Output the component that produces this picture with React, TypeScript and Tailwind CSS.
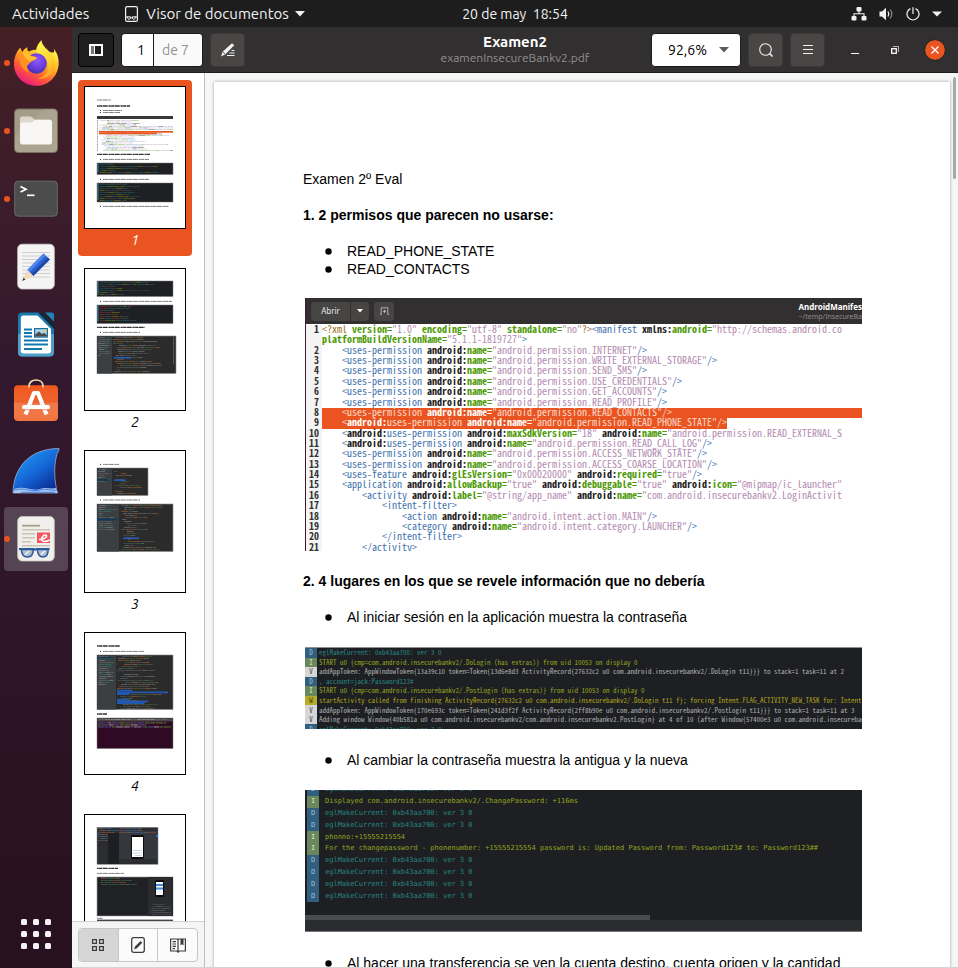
import { Fragment, type ReactNode } from "react";

/* ---------- Top bar ---------- */

function TopBar() {
  return (
    <header className="grid h-[27px] shrink-0 grid-cols-[1fr_auto_1fr] items-center bg-[#1d1d1d] text-[15px] leading-5 text-[#f2f2f2]">
      <div className="flex items-center">
        <button type="button" className="pl-3">Actividades</button>
        <button type="button" className="flex items-center pl-9">
          <svg width="13" height="16" viewBox="0 0 13 16" fill="none" stroke="#f2f2f2" className="mr-2">
            <rect x="0.6" y="0.6" width="11.8" height="14.8" rx="1.5" strokeWidth="1.2" />
            <path d="M0.5 11H3M10 11H12.5M5.8 11.8H7.2" />
            <path d="M2.6 10.8H5.6Q5.8 13.4 4.1 13.4Q2.6 13.4 2.6 10.8ZM7.4 10.8H10.4Q10.4 13.4 8.9 13.4Q7.2 13.4 7.4 10.8Z" />
          </svg>
          Visor de documentos
          <svg width="10" height="6" viewBox="0 0 10 6" className="ml-1.5" fill="#f2f2f2">
            <path d="M0 0H10L5 5.5Z" />
          </svg>
        </button>
      </div>
      <button type="button" className="pl-[72px] text-sm whitespace-pre">20 de may  18:54</button>
      <button type="button" aria-label="Sistema" className="flex items-center justify-end gap-3 pr-4">
        <svg width="16" height="14" viewBox="0 0 16 14" fill="#f2f2f2">
          <rect x="5.5" y="0" width="5" height="4.5" rx="1" />
          <rect x="0.5" y="9" width="5" height="4.5" rx="1" />
          <rect x="10.5" y="9" width="5" height="4.5" rx="1" />
          <path d="M8 4V7M3 9.5V6.8H13V9.5" fill="none" stroke="#f2f2f2" strokeWidth="1.1" />
        </svg>
        <svg width="15" height="14" viewBox="0 0 15 14" fill="none" stroke="#f2f2f2">
          <path d="M0.5 4.5H3L7 0.8V13.2L3 9.5H0.5Z" fill="#f2f2f2" stroke="none" />
          <path d="M9 4.5Q10.6 7 9 9.5" strokeWidth="1.3" />
          <path d="M11.2 2.5Q14.4 7 11.2 11.5" stroke="#8a8a8a" strokeWidth="1.2" />
        </svg>
        <svg width="14" height="14" viewBox="0 0 14 14" fill="none" stroke="#f2f2f2" strokeWidth="1.2">
          <path d="M4.4 1.6A6 6 0 1 0 9.6 1.6M7 0.3V7" />
        </svg>
        <svg width="10" height="6" viewBox="0 0 10 6" fill="#f2f2f2">
          <path d="M0 0.5H10L5 5.5Z" />
        </svg>
      </button>
    </header>
  );
}

/* ---------- Dock ---------- */

const firefox = (
  <>
    <defs>
      <linearGradient id="ffBody" x1="0.85" y1="0.1" x2="0.25" y2="1">
        <stop offset="0" stopColor="#fff04a" />
        <stop offset="0.35" stopColor="#ffae1f" />
        <stop offset="0.65" stopColor="#ff5a36" />
        <stop offset="1" stopColor="#e8128a" />
      </linearGradient>
      <radialGradient id="ffGlobe" cx="0.55" cy="0.35" r="0.7">
        <stop offset="0" stopColor="#9059ff" />
        <stop offset="0.5" stopColor="#6f3fe0" />
        <stop offset="1" stopColor="#3a2fae" />
      </radialGradient>
      <linearGradient id="ffFlame" x1="0.4" y1="0" x2="0.7" y2="1">
        <stop offset="0" stopColor="#fff44f" />
        <stop offset="0.6" stopColor="#ffd02e" />
        <stop offset="1" stopColor="#ff9a1f" />
      </linearGradient>
    </defs>
    <path d="M8.5 8.5C9 11 9.5 12 10.5 13C11.5 10.5 13.5 9 15.5 8.3C15 10.5 15.6 12 17 12.6C21 10 27 10 32 13L42 13.5C42.5 12 42 10.5 41.5 9.5C45.5 14 47.2 20 46.6 26C45.5 38 36 46.8 24.5 46.8C12 46.8 2 37.5 2 25C2 18.5 4.5 12.5 8.5 8.5Z" fill="url(#ffBody)" />
    <path d="M29.5 1C29.8 6 34 9.5 38 13C43 18 44.5 25 42 31C39.5 37 33 40.5 26 39.5C34 38 37.5 31.5 36 25C35 20 31 17 27 15.5C23.5 13.5 22.5 9 29.5 1Z" fill="url(#ffFlame)" />
    <circle cx="24.5" cy="24.5" r="10.3" fill="url(#ffGlobe)" />
    <path d="M7 14C11 12.5 15 14 18 16.5C21 17.5 24 17.5 25 18.5C24.5 21 20 21.5 18.5 23.5C14.5 26 13.5 30 17.5 33.5C11 32.5 7 25 7 14Z" fill="#ff9222" />
    <path d="M10 13C14 12.5 16 14.5 18.5 16.7L25 18.5C24 21 20 21 18 22.5C14 20 12 17 10 13Z" fill="#ffc02c" />
  </>
);

const files = (
  <>
    <rect x="2" y="1.5" width="44" height="44.5" rx="4.5" fill="#77705f" />
    <rect x="3" y="2.5" width="42" height="42.5" rx="4" fill="#a39d88" />
    <path d="M3 30L32 2.5H41Q45 2.5 45 6.5V41Q45 45 41 45H7Q3 45 3 41Z" fill="#aaa490" />
    <path d="M8 14V11.5Q8 9.5 10 9.5H18Q20 9.5 21 11L22.5 12.8H38V20H8Z" fill="#dcd9cc" />
    <path d="M8 18Q8 15.5 10.5 15.5H20L23 12.8H37.5Q40 12.8 40 15V35Q40 37.5 37.5 37.5H10.5Q8 37.5 8 35Z" fill="#f8f7f5" />
  </>
);

const terminal = (
  <>
    <rect x="2" y="5.5" width="44" height="36.5" rx="4" fill="#2f2f2f" />
    <rect x="2.7" y="6.2" width="42.6" height="35" rx="3.5" fill="#4c4c4c" stroke="#747474" strokeWidth="0.8" />
    <path d="M8.5 11.5L14 14.2L8.5 17" fill="none" stroke="#fff" strokeWidth="1.7" />
    <path d="M15 20.3H22.5" stroke="#fff" strokeWidth="1.7" />
  </>
);

const textEditor = (
  <>
    <rect x="5.7" y="1.2" width="36.6" height="44.8" rx="4.5" fill="#f4f4f4" stroke="#cfcfcf" strokeWidth="0.8" />
    <path d="M10 9.5H38M10 13H38M10 16.5H38M10 20H38M10 23.5H38M10 27H38M10 30.5H38M10 34H38" stroke="#c9c9c9" strokeWidth="0.9" />
    <path d="M31.5 10.5L37.8 16.5L21.3 33L15.3 27Z" fill="#2e63d3" />
    <path d="M31.5 10.5L33.5 12.4L17.2 28.9L15.3 27Z" fill="#4f86ee" />
    <path d="M35.8 14.6L37.8 16.5L21.3 33L19.3 31Z" fill="#1d49a5" />
    <path d="M15.3 27L21.3 33L10.2 38Z" fill="#f6d9b8" />
    <path d="M11.6 34.8L13.4 36.6L10.2 38Z" fill="#303030" />
  </>
);

const writer = (
  <>
    <path d="M10 1.5H27L42 17V41Q42 45.5 37.5 45.5H10Q6 45.5 6 41V5.5Q6 1.5 10 1.5Z" fill="#1b79ac" />
    <path d="M6 23H42V41Q42 45.5 37.5 45.5H10Q6 45.5 6 41Z" fill="#4f9fc8" />
    <path d="M11 4.5H25.5L39 18V39.5Q39 42.5 36 42.5H11.5Q8.8 42.5 8.8 39.5V7Q8.8 4.5 11 4.5Z" fill="#fff" />
    <path d="M26 1.5H31L42 12.5V18Z" fill="#12293c" />
    <path d="M33 1.5H39.5Q42 1.5 42 4V10.5Z" fill="#1d84b5" />
    <path d="M12 18.5H20M12 22H20M12 25.5H20M12 29.5H36M12 33.5H36M12 38H30" stroke="#1278ad" strokeWidth="1.8" />
    <rect x="22" y="17" width="14" height="9.7" fill="#17719f" />
    <rect x="23.2" y="18.2" width="11.6" height="7.3" fill="#a9d4ee" />
    <path d="M23.2 25.5V23.5L27 20.5L30 23L32 21.8L34.8 24V25.5Z" fill="#4b4b4b" />
    <circle cx="33" cy="19.6" r="1.4" fill="#f6c945" />
  </>
);

const software = (
  <>
    <defs>
      <linearGradient id="bag" x1="0" y1="0" x2="0" y2="1">
        <stop offset="0" stopColor="#f0591f" />
        <stop offset="0.5" stopColor="#ee6330" />
        <stop offset="0.51" stopColor="#f07a4b" />
        <stop offset="1" stopColor="#f17440" />
      </linearGradient>
    </defs>
    <rect x="2" y="6.3" width="44" height="35.7" rx="4" fill="url(#bag)" />
    <path d="M17 8.5V7C17 -1 31 -1 31 7V8.5" fill="none" stroke="#f7dfae" strokeWidth="1.7" />
    <path d="M13.5 35.5L22 14H26L34.5 35.5" fill="none" stroke="#fff" strokeWidth="4.2" strokeLinejoin="round" />
    <rect x="10" y="26" width="28" height="4.4" rx="2.2" fill="#fff" />
    <path d="M11 30.7H37" stroke="#d8512a" strokeWidth="0.6" />
  </>
);

const wireshark = (
  <>
    <defs>
      <linearGradient id="fin" x1="0.2" y1="0.1" x2="0.8" y2="0.9">
        <stop offset="0" stopColor="#1e93f0" />
        <stop offset="0.5" stopColor="#1668d8" />
        <stop offset="1" stopColor="#0a2f9a" />
      </linearGradient>
    </defs>
    <path d="M1 46C1.5 20 18 1.5 47 1.5C47.5 4 45.5 4.5 44.5 9C41.5 21 42.5 35 45.5 46Z" fill="url(#fin)" stroke="#a9bcd8" strokeWidth="0.7" />
    <path d="M1 46L3 41.5C14 39 20 44.5 28 42C34 39.5 39 42.5 44 41L45.5 46Z" fill="#a6c6f4" />
    <path d="M3 43C12 40 20 45.5 28 43C34 41 39 44 45 43M9 45.3H43" stroke="#2f6fd0" strokeWidth="0.8" fill="none" />
  </>
);

const evince = (
  <>
    <rect x="5.7" y="1.5" width="36.6" height="44.5" rx="4.5" fill="#f1efeb" stroke="#c9c5be" strokeWidth="0.8" />
    <path d="M10 10.7H28" stroke="#a79f8c" strokeWidth="1.8" />
    <path d="M10 14.7H38M10 18.7H23M10 22.7H23M10 26.7H19M10 30.7H38" stroke="#c9c4b8" strokeWidth="1.5" />
    <rect x="25" y="17.5" width="13" height="10.5" fill="#f5545a" />
    <path d="M27 24.5C31 24.5 35.5 22.5 34.5 20.5C33 18.5 28.5 22 29.8 25.2C31 27.2 34.5 26.5 38 25" fill="none" stroke="#fff" strokeWidth="1.4" />
    <path d="M9.3 34.5H21.3Q21.2 42 15.4 42Q9.8 42 9.3 34.5ZM25.3 34.5H36.2Q36 42 31 42Q26 42 25.3 34.5Z" fill="#b3c0cc" stroke="#2c5a9e" strokeWidth="1.6" />
    <path d="M7 34H22Q23.3 35.2 24.6 34H37.6" fill="none" stroke="#2c5a9e" strokeWidth="2" />
    <path d="M12.8 39.8L17.2 36M28.8 39.8L33 36" stroke="#f2f5f8" strokeWidth="1.3" />
  </>
);

const apps: { name: string; icon: ReactNode; running?: boolean; active?: boolean }[] = [
  { name: "Firefox", icon: firefox, running: true },
  { name: "Archivos", icon: files, running: true },
  { name: "Terminal", icon: terminal, running: true },
  { name: "Editor de textos", icon: textEditor },
  { name: "LibreOffice Writer", icon: writer },
  { name: "Software", icon: software },
  { name: "Wireshark", icon: wireshark },
  { name: "Visor de documentos", icon: evince, running: true, active: true },
];

function Dock() {
  return (
    <nav aria-label="Dock" className="flex w-[72px] shrink-0 flex-col items-center gap-1 bg-linear-to-b from-[#451f24] via-[#34192e] via-35% to-[#27101f] pt-1 pb-0.5">
      {apps.map((app) => (
        <button
          key={app.name}
          type="button"
          aria-label={app.name}
          className={`relative flex size-16 shrink-0 items-center justify-center rounded-sm ${app.active ? "bg-[#564353]" : ""}`}
        >
          {app.running && <span className="absolute left-0 size-1.5 rounded-full bg-[#e95420]" />}
          <svg width="48" height="48" viewBox="0 0 48 48">{app.icon}</svg>
        </button>
      ))}
      <button type="button" aria-label="Mostrar aplicaciones" className="mt-auto flex size-16 items-center justify-center">
        <svg width="30" height="30" viewBox="0 0 30 30" fill="#f4f1f3">
          {[0, 12, 24].map((y) => [0, 12, 24].map((x) => <rect key={`${x}-${y}`} x={x} y={y} width="6" height="6" rx="1.5" />))}
        </svg>
      </button>
    </nav>
  );
}

/* ---------- Window header ---------- */

const headerButton = "flex h-[34px] items-center justify-center rounded-sm border";

function WindowHeader() {
  return (
    <div className="grid h-[46px] shrink-0 grid-cols-[1fr_auto_1fr] items-center border-b border-[#1c1b1b] bg-[#322f30] px-1.5">
      <div className="flex items-center gap-[7px]">
        <button type="button" aria-label="Panel lateral" className={`${headerButton} w-9 border-black bg-[#1f1e1e]`}>
          <svg width="14" height="12" viewBox="0 0 14 12">
            <rect x="1" y="1" width="12" height="10" fill="none" stroke="#fff" strokeWidth="2" />
            <rect x="2" y="2" width="3" height="8" fill="#777" />
            <path d="M5.5 1V11" stroke="#fff" />
          </svg>
        </button>
        <div className="flex h-[34px] overflow-hidden rounded-sm border border-[#1c1b1b] text-sm">
          <input aria-label="Página" defaultValue="1" className="w-8 border-r border-[#1c1b1b] bg-white pr-2 text-right text-black outline-none" />
          <span className="flex w-12 items-center bg-[#fafafa] pl-2 text-[#929292]">de 7</span>
        </div>
        <button type="button" aria-label="Anotar" className={`${headerButton} w-[35px] border-[#3b3938] bg-[#484745]`}>
          <svg width="16" height="16" viewBox="0 0 16 16" fill="#f2f2f2">
            <path d="M12 1.2L14.2 3.3L5.5 12.2L1 14.5L2.6 9.8Z" />
            <path d="M2.9 10L5.2 12.1" stroke="#484745" strokeWidth="0.9" />
            <path d="M11.5 8.5H14.5M9.5 11H14.5M7 13.5H14.5" stroke="#f2f2f2" strokeWidth="1.1" />
          </svg>
        </button>
      </div>
      <div className="text-center">
        <h1 className="text-[15px] leading-4 font-bold text-white">Examen2</h1>
        <p className="text-xs leading-4 text-[#929090]">examenInsecureBankv2.pdf</p>
      </div>
      <div className="flex items-center justify-end">
        <div className="relative flex items-center">
          <select aria-label="Zoom" className="h-[34px] w-[90px] appearance-none rounded-sm border border-[#1c1b1b] bg-white pl-4 text-sm text-black">
            <option>92,6%</option>
          </select>
          <svg width="10" height="6" viewBox="0 0 10 6" fill="#5c5c5c" className="pointer-events-none absolute right-3">
            <path d="M0 0H10L5 5.5Z" />
          </svg>
        </div>
        <button type="button" aria-label="Buscar" className={`${headerButton} ml-[7px] w-[35px] border-[#3b3938] bg-[#484745]`}>
          <svg width="16" height="16" viewBox="0 0 16 16" fill="none" stroke="#f2f2f2" strokeWidth="1.1">
            <circle cx="7.5" cy="7.5" r="5.8" />
            <path d="M11.5 11.5L14.5 14.5" strokeWidth="1.6" />
          </svg>
        </button>
        <button type="button" aria-label="Menú" className={`${headerButton} ml-[7px] w-[35px] border-[#3b3938] bg-[#484745]`}>
          <svg width="10" height="11" viewBox="0 0 10 11" stroke="#f2f2f2">
            <path d="M0 1.5H10M0 5.5H10M0 9.5H10" />
          </svg>
        </button>
        <button type="button" aria-label="Minimizar" className="ml-5 flex size-5 items-center justify-center">
          <svg width="8" height="8" viewBox="0 0 8 8" stroke="#fff"><path d="M0 7.5H8" /></svg>
        </button>
        <button type="button" aria-label="Restaurar" className="ml-5 flex size-5 items-center justify-center">
          <svg width="8" height="8" viewBox="0 0 8 8" fill="none" stroke="#fff">
            <path d="M2 0.5H7.5V6" stroke="#b9b8b8" />
            <rect x="0.7" y="2.7" width="4.6" height="4.6" strokeWidth="1.3" />
          </svg>
        </button>
        <button type="button" aria-label="Cerrar" className="mr-[7px] ml-5 flex size-5 items-center justify-center rounded-full bg-[#e95420] outline-1 outline-[#2a2727]">
          <svg width="8" height="8" viewBox="0 0 8 8" stroke="#fff" strokeWidth="1.4"><path d="M0.5 0.5L7.5 7.5M7.5 0.5L0.5 7.5" /></svg>
        </button>
      </div>
    </div>
  );
}

/* ---------- Thumbnails ---------- */

function random(seed: number) {
  let s = seed * 7919 + 17;
  return () => {
    s = (s * 16807) % 2147483647;
    return s / 2147483647;
  };
}

type BoxProps = { x: number; y: number; w: number; h: number };

function MiniLine({ x, y, w, bold, bullet }: { x: number; y: number; w: number; bold?: boolean; bullet?: boolean }) {
  return (
    <>
      {bullet && <rect x={x - 3} y={y - 0.5} width="1" height="1" fill="#333" />}
      <path
        d={`M${x} ${y}H${x + w}`}
        stroke={bold ? "#333" : "#7d7d7d"}
        strokeWidth={bold ? 1.3 : 1}
        strokeDasharray="1.8 0.3 3.3 0.5 4.1 0.3 1.2 0.5"
      />
    </>
  );
}

/* Rows of short coloured dashes, standing for code or log lines. */
function MiniCode({
  x, y, w, h, colors, seed, pitch = 2, indent = 6, long = 0.5, opacity = 0.6,
}: BoxProps & { colors: string[]; seed: number; pitch?: number; indent?: number; long?: number; opacity?: number }) {
  const next = random(seed);
  const dashes: ReactNode[] = [];
  for (let row = y + 1; row < y + h - 0.5; row += pitch) {
    let cx = x + Math.floor(next() * indent);
    const end = x + w * (long + (next() - 0.5) * 0.7);
    while (cx < Math.min(end, x + w - 1)) {
      const len = Math.min(2 + next() * 6, x + w - cx);
      dashes.push(
        <rect key={dashes.length} x={cx} y={row} width={len} height="0.9" fill={colors[Math.floor(next() * colors.length)]} />,
      );
      cx += len + 0.6;
    }
  }
  return <g opacity={opacity}>{dashes}</g>;
}

function MiniLog({ x, y, w, h, seed, colors = ["#1f6b6b", "#20585c", "#7b8722", "#4a4d50"] }: BoxProps & { seed: number; colors?: string[] }) {
  return (
    <>
      <rect x={x} y={y} width={w} height={h} fill="#1e2023" stroke="#77797b" strokeWidth="0.5" />
      <rect x={x} y={y} width="1.6" height={h - 2} fill="#3d6a7d" />
      <MiniCode x={x + 2.5} y={y} w={w - 4} h={h - 1} seed={seed} colors={colors} indent={1} long={0.45} />
    </>
  );
}

function MiniIde({ x, y, w, h, side, seed, children }: BoxProps & { side: number; seed: number; children?: ReactNode }) {
  return (
    <>
      <rect x={x} y={y} width={w} height={h} fill="#2b2b2b" stroke="#8a8a8a" strokeWidth="0.6" />
      <rect x={x} y={y} width={side} height={h} fill="#3c3f41" />
      <MiniCode x={x + 1} y={y} w={side - 3} h={h * 0.55} seed={seed} colors={["#8b8e90", "#6e7173", "#2f7d78"]} indent={2} />
      <MiniCode x={x + side + 1} y={y} w={w - side - 2} h={h} seed={seed + 5} colors={["#a9642f", "#7d8790", "#5f676d", "#4f6d3f"]} indent={9} long={0.42} />
      {children}
    </>
  );
}

const thumbnails: ReactNode[] = [
  <>
    <MiniLine x={12} y={13} w={14} />
    <MiniLine x={12} y={19} w={33} bold />
    <MiniLine x={18} y={23.5} w={19} bullet />
    <MiniLine x={18} y={25.5} w={17} bullet />
    <rect x={12} y={29} width={76} height={3} fill="#3a3738" />
    <path d="M12.5 33V64" stroke="#999" strokeWidth="1" strokeDasharray="1 0.6" />
    <MiniCode x={14} y={32} w={74} h={32} seed={3} pitch={1.5} opacity={0.7} colors={["#9cc07c", "#d9c0d6", "#777", "#a9c4e4", "#d9c0d6"]} indent={9} long={0.75} />
    <rect x={14} y={44} width={74} height={1.7} fill="#e95420" />
    <rect x={14} y={45.6} width={58} height={1.7} fill="#e95420" />
    <MiniLine x={12} y={67.4} w={53} bold />
    <MiniLine x={18} y={72.4} w={46} bullet />
    <MiniLog x={12} y={76} w={76} h={11.5} seed={9} />
    <MiniLine x={18} y={92.4} w={46} bullet />
    <MiniLog x={12} y={96} w={76} h={19} seed={11} />
    <MiniLine x={18} y={119.4} w={66} bullet />
  </>,
  <>
    <MiniLog x={12} y={12} w={76} h={15.5} seed={21} />
    <MiniLine x={18} y={32.4} w={69} bullet />
    <MiniLog x={12} y={36} w={76} h={18.5} seed={25} colors={["#9c3030", "#7b8722", "#1f6b6b", "#55595c"]} />
    <MiniLine x={12} y={58.4} w={48} bold />
    <MiniLine x={18} y={63.4} w={37} bullet />
    <MiniIde x={12} y={67} w={79} h={37.5} side={15} seed={31}>
      <rect x={29} y={88} width={17} height={1.5} fill="#245fbf" />
      <rect x={88} y={68} width={1} height={27} fill="#55585a" />
    </MiniIde>
  </>,
  <>
    <MiniLine x={18} y={13.4} w={16} bullet />
    <MiniIde x={12} y={17} w={51} h={27.5} side={15} seed={41}>
      <rect x={12} y={28} width={11} height={2} fill="#0f3a5a" />
      <rect x={29} y={28.5} width={12} height={1.4} fill="#245fbf" />
    </MiniIde>
    <MiniLine x={18} y={49} w={37} bullet />
    <MiniIde x={12} y={53} w={76} h={47.5} side={22} seed={47}>
      <rect x={12} y={67.5} width={20} height={2} fill="#0f3a5a" />
      <rect x={38} y={86.5} width={16} height={1.5} fill="#245fbf" />
    </MiniIde>
  </>,
  <>
    <MiniLine x={12} y={13} w={23} bold />
    <MiniLine x={18} y={18.4} w={41} bullet />
    <MiniIde x={12} y={22} w={76} h={54.5} side={19} seed={53}>
      <rect x={12} y={24} width={16} height={1.4} fill="#0f3a5a" />
      <path d="M32 57.5H47M32 59.3H83M32 61.2H44M32 66.5H44M32 68.3H63M32 70.2H59" stroke="#2358b0" strokeWidth="1.7" />
    </MiniIde>
    <MiniLine x={12} y={81} w={10} bold />
    <rect x={12} y={85} width={76} height={30.5} fill="#300a24" stroke="#777" strokeWidth="0.5" />
    <rect x={12} y={85} width={76} height={3.5} fill="#4a4647" />
    <MiniCode x={13} y={85} w={74} h={3} seed={59} pitch={4} colors={["#bbb", "#777"]} indent={2} long={0.9} />
    <MiniCode x={13} y={88.5} w={74} h={7} seed={61} opacity={0.85} colors={["#c9c1c7", "#5fa32e", "#5a6ea8"]} indent={1} long={0.75} />
  </>,
  <>
    <rect x={12} y={12.3} width={61} height={37} fill="#2b2d30" stroke="#888" strokeWidth="0.5" />
    <MiniCode x={13} y={12} w={21} h={14} seed={67} colors={["#777", "#2f6fb5", "#a9642f"]} indent={3} />
    <rect x={23} y={18} width={11} height={31} fill="#1e1f22" />
    <rect x={34} y={16} width={38} height={28} fill="#34373b" />
    <MiniCode x={34} y={12} w={37} h={6} seed={71} colors={["#777", "#3b74c9", "#b44"]} indent={3} long={0.8} />
    <rect x={46} y={20} width={13} height={24} rx={1} fill="#0c0c0c" />
    <rect x={47} y={22} width={11} height={20} fill="#fff" />
    <path d="M48 35.5H57M48 38H57M50 40.5H57" stroke="#bcd" strokeWidth="0.8" />
    <rect x={71} y={20} width={2} height={2} fill="#2b6ff0" />
    <MiniLine x={12} y={53.4} w={21} bold />
    <MiniLine x={12} y={58.4} w={27} />
    <rect x={12} y={62} width={76} height={39} fill="#1f2124" stroke="#999" strokeWidth="0.6" />
    <rect x={63} y={62} width={25} height={39} fill="#2a2c30" />
    <MiniCode x={15} y={62} w={40} h={8} seed={73} colors={["#3f7f4a", "#a9642f", "#6c7278"]} indent={2} />
    <rect x={70} y={65} width={9} height={17} rx={1} fill="#0c0c0c" />
    <rect x={71} y={67} width={7} height={13} fill="#f5f7fa" />
    <path d="M71 70H78M71 73.5H78" stroke="#3e8fe0" strokeWidth="1.8" />
    <MiniCode x={66} y={88} w={20} h={12} seed={79} colors={["#6c7075", "#53575c"]} indent={3} long={0.7} />
    <MiniLine x={12} y={103.4} w={6} />
    <rect x={12} y={104.6} width={76} height={20} fill="#45484b" />
  </>,
];

function Thumbnail({ page, selected }: { page: number; selected: boolean }) {
  return (
    <button
      type="button"
      aria-label={`Página ${page}`}
      aria-pressed={selected}
      className={`flex shrink-0 flex-col items-center rounded-sm p-1.5 pb-[5px] ${selected ? "bg-[#e95420] text-white" : "text-black"}`}
    >
      <svg width="102" height="143" viewBox="-1 -1 102 143">
        <rect x="-0.5" y="-0.5" width="101" height="142" fill="#fff" stroke="#000" />
        {thumbnails[page - 1]}
      </svg>
      <span className="text-sm leading-[22px] italic">{page}</span>
    </button>
  );
}

function Sidebar() {
  const modeButton = "flex flex-1 items-center justify-center";
  return (
    <aside className="flex w-[133px] shrink-0 flex-col border-r border-[#bdbdbd] bg-white">
      <div className="flex min-h-0 flex-1 flex-col gap-1.5 overflow-hidden px-1.5 pt-[7px] pr-3">
        {thumbnails.map((_, i) => (
          <Thumbnail key={i} page={i + 1} selected={i === 0} />
        ))}
      </div>
      <div className="border-t border-[#d0d0d0] bg-[#f5f5f5] px-1.5 pt-1.5 pb-[5px]">
        <div className="flex h-[34px] w-[120px] divide-x divide-[#c6c6c6] overflow-hidden rounded-sm border border-[#c6c6c6] bg-[#fbfbfb]">
          <button type="button" aria-label="Miniaturas" className={`${modeButton} bg-[#d5d5d5]`}>
            <svg width="12" height="12" viewBox="0 0 12 12" fill="none" stroke="#3d3d3d" strokeWidth="1.2">
              <path d="M0.6 0.6H4.4V4.4H0.6ZM7.6 0.6H11.4V4.4H7.6ZM0.6 7.6H4.4V11.4H0.6ZM7.6 7.6H11.4V11.4H7.6Z" />
            </svg>
          </button>
          <button type="button" aria-label="Anotaciones" className={modeButton}>
            <svg width="14" height="16" viewBox="0 0 14 16">
              <rect x="0.7" y="0.7" width="12.6" height="14.6" rx="2" fill="none" stroke="#3d3d3d" strokeWidth="1.3" />
              <path d="M9.5 4L11.3 5.8L6 11.3L3 12.5L4 9.5Z" fill="#3d3d3d" />
            </svg>
          </button>
          <button type="button" aria-label="Marcadores" className={modeButton}>
            <svg width="16" height="15" viewBox="0 0 16 15" fill="none" stroke="#3d3d3d" strokeWidth="1.2">
              <path d="M0.6 1H7.3L8 1.8L8.7 1H15.4V13H9L8 14.2L7 13H0.6ZM8 2V13" />
              <path d="M2.5 3.7H6M2.5 6H6M2.5 8.3H6M2.5 10.6H5" />
              <path d="M10.5 1V7.5L12 6.3L13.5 7.5V1Z" fill="#3d3d3d" stroke="none" />
            </svg>
          </button>
        </div>
      </div>
    </aside>
  );
}

/* ---------- Figures of the document ---------- */

const manifest: [number | null, string][] = [
  [1, '<?xml version="1.0" encoding="utf-8" standalone="no"?><manifest xmlns:android="http://schemas.android.co'],
  [null, 'platformBuildVersionName="5.1.1-1819727">'],
  [2, '    <uses-permission android:name="android.permission.INTERNET"/>'],
  [3, '    <uses-permission android:name="android.permission.WRITE_EXTERNAL_STORAGE"/>'],
  [4, '    <uses-permission android:name="android.permission.SEND_SMS"/>'],
  [5, '    <uses-permission android:name="android.permission.USE_CREDENTIALS"/>'],
  [6, '    <uses-permission android:name="android.permission.GET_ACCOUNTS"/>'],
  [7, '    <uses-permission android:name="android.permission.READ_PROFILE"/>'],
  [8, '    <uses-permission android:name="android.permission.READ_CONTACTS"/>'],
  [9, '    <android:uses-permission android:name="android.permission.READ_PHONE_STATE"/>'],
  [10, '    <android:uses-permission android:maxSdkVersion="18" android:name="android.permission.READ_EXTERNAL_S'],
  [11, '    <android:uses-permission android:name="android.permission.READ_CALL_LOG"/>'],
  [12, '    <uses-permission android:name="android.permission.ACCESS_NETWORK_STATE"/>'],
  [13, '    <uses-permission android:name="android.permission.ACCESS_COARSE_LOCATION"/>'],
  [14, '    <uses-feature android:glEsVersion="0x00020000" android:required="true"/>'],
  [15, '    <application android:allowBackup="true" android:debuggable="true" android:icon="@mipmap/ic_launcher"'],
  [16, '        <activity android:label="@string/app_name" android:name="com.android.insecurebankv2.LoginActivit'],
  [17, "            <intent-filter>"],
  [18, '                <action android:name="android.intent.action.MAIN"/>'],
  [19, '                <category android:name="android.intent.category.LAUNCHER"/>'],
  [20, "            </intent-filter>"],
  [21, "        </activity>"],
];

function highlight(line: string, selected: boolean) {
  const tokens = line.match(/"[^"]*"?|<\?xml|\?>|\w+:|\w+=|\w[\w-]*|[^"\w?]+/g) ?? [];
  return tokens.map((token, i) => {
    let style = "text-[#3f73ad]";
    if (token.startsWith('"')) style = "text-[#b48bb0]";
    else if (token.includes("?")) style = "text-[#9a6a1c]";
    else if (token.endsWith(":")) style = "font-bold text-[#1c1c1c]";
    else if (token.endsWith("=")) style = "font-bold text-[#4e9a06]";
    if (selected) style = /[:=]$/.test(token) ? "font-bold text-white" : "text-[#fbdacd]";
    return <span key={i} className={style}>{token}</span>;
  });
}

function ManifestFigure() {
  return (
    <figure className="mt-5 mb-[21px] h-[253px] overflow-hidden border-l border-[#3a1a30] bg-white">
      <div className="flex h-[26px] items-center bg-[#322f30] pl-[5px] font-['Noto_Sans',sans-serif]">
        <span className="flex h-[19px] w-[39px] items-center justify-center rounded-l-sm bg-[#474543] text-[8px] text-[#e4e4e4]">Abrir</span>
        <span className="ml-px flex h-[19px] w-[18px] items-center justify-center rounded-r-sm bg-[#474543]">
          <svg width="6" height="4" viewBox="0 0 6 4" fill="#fff"><path d="M0 0H6L3 3.5Z" /></svg>
        </span>
        <span className="ml-[5px] flex h-[19px] w-5 items-center justify-center rounded-sm bg-[#474543]">
          <svg width="9" height="8" viewBox="0 0 9 8" fill="none" stroke="#ccc" strokeWidth="0.8">
            <path d="M0 7.5H1.2V0.8H7.8V7.5H9M4.5 2.8V6M2.9 4.4H6.1" />
          </svg>
        </span>
        <div className="ml-auto text-right whitespace-nowrap">
          <p className="text-[8px] leading-[11px] font-bold text-white">AndroidManifes</p>
          <p className="text-[7px] leading-[10px] text-[#8e8c8c]">~/temp/InsecureBa</p>
        </div>
      </div>
      <div className="grid h-[229px] auto-rows-fr pt-px font-['Noto_Sans_Mono_CJK_SC','Liberation_Mono',monospace] text-[10px] leading-[8px]">
        {manifest.map(([n, line], i) => {
          const selected = n === 8 || n === 9;
          return (
            <div key={i} className="flex min-h-0 items-stretch whitespace-pre">
              <span className="w-4 shrink-0 bg-[#f4f4f4] pr-[3px] text-right font-bold text-[#333]">{n}</span>
              <code className={`font-[inherit] ${n === 8 ? "grow" : ""} ${selected ? "bg-[#e95420]" : ""}`}>{highlight(line, selected)}</code>
            </div>
          );
        })}
      </div>
    </figure>
  );
}

type Level = "D" | "I" | "V" | "W";

const badge: Record<Level, string> = {
  D: "bg-[#305f80] text-[#a9bccb]",
  I: "bg-[#68875a] text-[#e0e8dc]",
  V: "bg-[#d6d6d6] text-[#444]",
  W: "bg-[#b6ab2b] text-[#3a3608]",
};

const message: Record<Level, string> = {
  D: "text-[#268583]",
  I: "text-[#93a31f]",
  V: "text-[#aeafb1]",
  W: "text-[#aca31f]",
};

const egl: [Level, string] = ["D", "eglMakeCurrent: 0xb43aa700: ver 3 0"];

const loginLog: [Level, string][] = [
  egl,
  ["I", "START u0 {cmp=com.android.insecurebankv2/.DoLogin (has extras)} from uid 10053 on display 0"],
  ["V", "addAppToken: AppWindowToken{13a39c10 token=Token{13d6e8d3 ActivityRecord{27632c2 u0 com.android.insecurebankv2/.DoLogin t11}}} to stack=1 task=11 at 2"],
  ["D", ", account=jack:Password123#"],
  ["I", "START u0 {cmp=com.android.insecurebankv2/.PostLogin (has extras)} from uid 10053 on display 0"],
  ["W", "startActivity called from finishing ActivityRecord{27632c2 u0 com.android.insecurebankv2/.DoLogin t11 f}; forcing Intent.FLAG_ACTIVITY_NEW_TASK for: Intent {"],
  ["V", "addAppToken: AppWindowToken{170e693c token=Token{241d3f2f ActivityRecord{2ff8b90e u0 com.android.insecurebankv2/.PostLogin t11}}} to stack=1 task=11 at 3"],
  ["V", "Adding window Window{40b581a u0 com.android.insecurebankv2/com.android.insecurebankv2.PostLogin} at 4 of 10 (after Window{57400e3 u0 com.android.insecurebankv"],
  egl,
];

const passwordLog: [Level, string][] = [
  egl,
  ["I", "Displayed com.android.insecurebankv2/.ChangePassword: +116ms"],
  egl,
  egl,
  ["I", "phonno:+15555215554"],
  ["I", "For the changepassword - phonenumber: +15555215554 password is: Updated Password from: Password123# to: Password123##"],
  egl,
  egl,
  egl,
  egl,
];

function LogRows({ rows }: { rows: [Level, string][] }) {
  return (
    <>
      {rows.map(([level, text], i) => (
        <Fragment key={i}>
          <span className={`flex items-center justify-center ${badge[level]}`}>{level}</span>
          <code className={`flex min-w-0 items-center font-[inherit] whitespace-pre ${message[level]}`}>{text}</code>
        </Fragment>
      ))}
    </>
  );
}

function LoginLogFigure() {
  return (
    <figure className="mt-[21px] mb-[22px] h-[82px] overflow-hidden border-t border-[#8f9092] bg-[#1e1f22]">
      <div className="grid h-[86px] auto-rows-fr grid-cols-[12px_1fr] gap-x-0.5 font-['Noto_Sans_Mono_CJK_SC','Liberation_Mono',monospace] text-[7px] leading-[9px]">
        <LogRows rows={loginLog} />
      </div>
    </figure>
  );
}

function PasswordLogFigure() {
  return (
    <figure className="mt-[21px] mb-[22px] flex h-[142px] flex-col overflow-hidden border-b border-[#77787a] bg-[#1e1f22]">
      <div className="flex h-[112px] flex-col justify-end overflow-hidden">
        <div className="grid h-[118px] shrink-0 auto-rows-fr grid-cols-[12px_1fr] gap-x-1.5 pl-0.5 font-['DejaVu_Sans_Mono',monospace] text-[7px] leading-[11px]">
          <LogRows rows={passwordLog} />
        </div>
      </div>
      <div className="mt-auto h-[5px] w-[62%] bg-[#4a4b4d]" />
      <div className="h-[11px] bg-[#2b2c2f]" />
    </figure>
  );
}

/* ---------- Document ---------- */

function Bullets({ items }: { items: string[] }) {
  return (
    <ul className="mt-[18px] pl-[22px]">
      {items.map((item) => (
        <li key={item} className="flex items-center">
          <svg width="7" height="7" viewBox="0 0 7 7" className="mr-[15px] shrink-0"><circle cx="3.5" cy="3.5" r="3.2" /></svg>
          {item}
        </li>
      ))}
    </ul>
  );
}

function Document() {
  return (
    <main className="relative min-w-0 flex-1 overflow-hidden bg-[#f6f6f6]">
      <article className="mt-[9px] mr-2 ml-[9px] bg-white pt-[88px] pr-[88px] pb-24 pl-[89px] font-['Liberation_Sans',Arial,sans-serif] text-sm leading-[18px] text-black shadow-[0_0_3px_rgba(0,0,0,0.35)]">
        <p>Examen 2º Eval</p>
        <h2 className="mt-[18px] font-bold">1. 2 permisos que parecen no usarse:</h2>
        <Bullets items={["READ_PHONE_STATE", "READ_CONTACTS"]} />
        <div className="pl-0.5"><ManifestFigure /></div>
        <h2 className="font-bold">2. 4 lugares en los que se revele información que no debería</h2>
        <Bullets items={["Al iniciar sesión en la aplicación muestra la contraseña"]} />
        <div className="pl-0.5"><LoginLogFigure /></div>
        <Bullets items={["Al cambiar la contraseña muestra la antigua y la nueva"]} />
        <div className="pl-0.5"><PasswordLogFigure /></div>
        <Bullets items={["Al hacer una transferencia se ven la cuenta destino, cuenta origen y la cantidad"]} />
      </article>
      <div className="absolute top-1 right-0.5 h-[102px] w-[3px] rounded-full bg-[#a8a8a8]" />
    </main>
  );
}

export default function App() {
  return (
    <div className="flex h-screen flex-col overflow-hidden font-['Ubuntu','Noto_Sans',sans-serif]">
      <TopBar />
      <div className="flex min-h-0 flex-1">
        <Dock />
        <div className="flex min-w-0 flex-1 flex-col">
          <WindowHeader />
          <div className="flex min-h-0 flex-1 border-b border-[#d4d4d4]">
            <Sidebar />
            <Document />
          </div>
        </div>
      </div>
    </div>
  );
}
